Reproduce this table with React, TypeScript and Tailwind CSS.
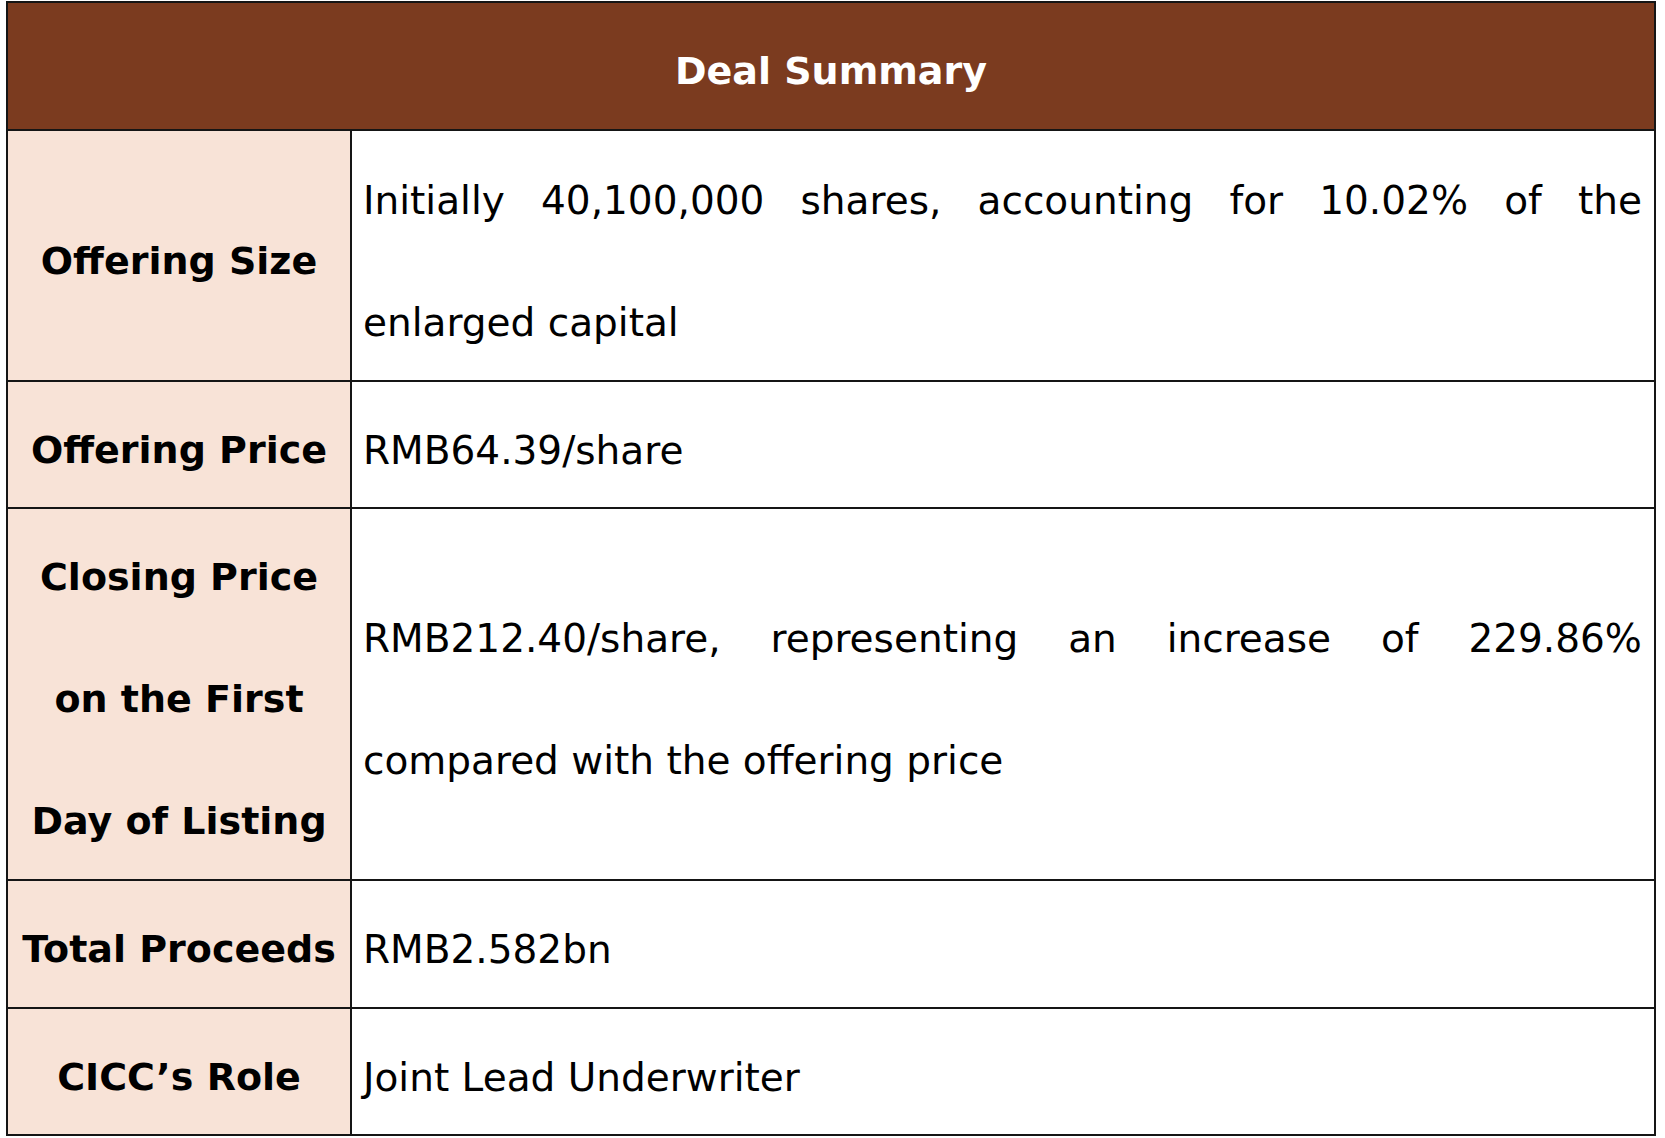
import React from "react";

const Justified = ({ words }: { words: string[] }) => (
  <div className="flex justify-between h-[122px] items-center pt-[13px]">
    {words.map((w, i) => (
      <span key={i}>{w}</span>
    ))}
  </div>
);

const Line = ({ children }: { children: React.ReactNode }) => (
  <div className="h-[122px] flex items-center pt-[13px] whitespace-nowrap">{children}</div>
);

const Label = ({ lines }: { lines: string[] }) => (
  <div className="bg-[#f8e3d7] border-r-2 border-[#151515] flex flex-col items-center justify-center font-bold text-[38px]">
    {lines.map((l, i) => (
      <div key={i} className="h-[122px] shrink-0 flex items-center pt-[11px] whitespace-nowrap">
        {l}
      </div>
    ))}
  </div>
);

const Value = ({ children }: { children: React.ReactNode }) => (
  <div className="pl-[11px] pr-[12px] text-[39px] flex flex-col justify-center overflow-hidden">{children}</div>
);

export default function App() {
  return (
    <div className="bg-white w-[1665px] h-[1138px] pl-[6px] pt-[1px] text-black [font-family:'DejaVu_Sans','Liberation_Sans',sans-serif]">
      <div className="w-[1650px] border-2 border-[#151515]">
        <div className="h-[128px] bg-[#7b3b1f] flex items-center justify-center border-b-2 border-[#151515] pt-[10px]">
          <span className="text-white font-bold text-[38px]">Deal Summary</span>
        </div>

        {/* Offering Size */}
        <div className="grid grid-cols-[344px_1fr] border-b-2 border-[#151515] h-[251px]">
          <Label lines={["Offering Size"]} />
          <Value>
            <Justified
              words={["Initially", "40,100,000", "shares,", "accounting", "for", "10.02%", "of", "the"]}
            />
            <Line>enlarged capital</Line>
          </Value>
        </div>

        {/* Offering Price */}
        <div className="grid grid-cols-[344px_1fr] border-b-2 border-[#151515] h-[127px]">
          <Label lines={["Offering Price"]} />
          <Value>
            <Line>RMB64.39/share</Line>
          </Value>
        </div>

        {/* Closing Price */}
        <div className="grid grid-cols-[344px_1fr] border-b-2 border-[#151515] h-[372px]">
          <Label lines={["Closing Price", "on the First", "Day of Listing"]} />
          <Value>
            <Justified words={["RMB212.40/share,", "representing", "an", "increase", "of", "229.86%"]} />
            <Line>compared with the offering price</Line>
          </Value>
        </div>

        {/* Total Proceeds */}
        <div className="grid grid-cols-[344px_1fr] border-b-2 border-[#151515] h-[128px]">
          <Label lines={["Total Proceeds"]} />
          <Value>
            <Line>RMB2.582bn</Line>
          </Value>
        </div>

        {/* CICC's Role */}
        <div className="grid grid-cols-[344px_1fr] h-[125px]">
          <Label lines={["CICC’s Role"]} />
          <Value>
            <Line>Joint Lead Underwriter</Line>
          </Value>
        </div>
      </div>
    </div>
  );
}
